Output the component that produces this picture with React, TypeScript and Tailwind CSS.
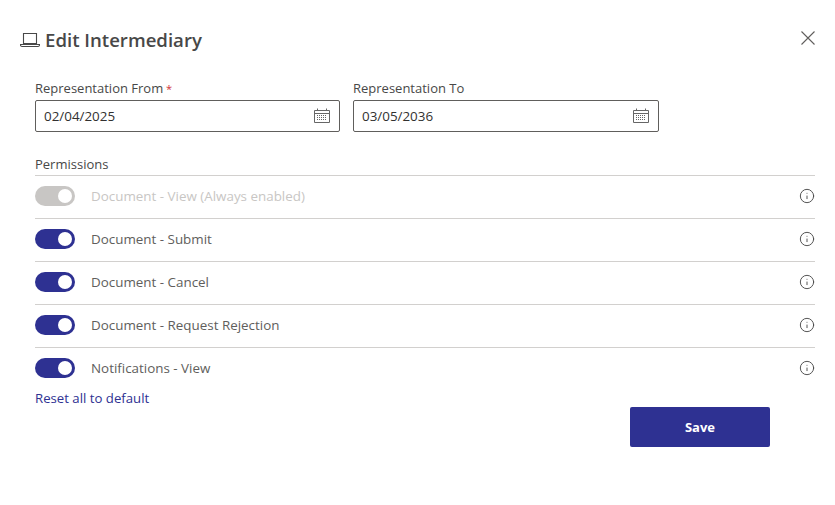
import React from 'react';
import { Info } from 'lucide-react';

const permissions = [
  { label: 'Document - View (Always enabled)', disabled: true },
  { label: 'Document - Submit', disabled: false },
  { label: 'Document - Cancel', disabled: false },
  { label: 'Document - Request Rejection', disabled: false },
  { label: 'Notifications - View', disabled: false },
];

function LaptopIcon() {
  return (
    <svg width="20" height="20" viewBox="0 0 20 20" fill="none" stroke="#484848" strokeWidth="1.1">
      <path d="M3.5 3.5h13v10h-13z" />
      <path d="M0.5 14.5h19v0.5a1.5 1.5 0 0 1-1.5 1.5h-16a1.5 1.5 0 0 1-1.5-1.5z" />
    </svg>
  );
}

function CloseIcon() {
  return (
    <svg width="14" height="14" viewBox="0 0 14 14" fill="none" stroke="#605e5c" strokeWidth="1.1">
      <path d="M0.5 0.5l13 13M13.5 0.5l-13 13" />
    </svg>
  );
}

function CalendarIcon() {
  return (
    <svg width="18" height="18" viewBox="0 0 18 18" fill="none" stroke="#666" strokeWidth="1">
      <path d="M1.5 3.5h15v12h-15z" />
      <path d="M1.5 6.5h15" />
      <path d="M4.5 1.5v2M13.5 1.5v2" />
      <path d="M4 8.5h10M4 10.5h10M4 12.5h10" strokeDasharray="1 1" />
    </svg>
  );
}

function DateField({ label, value, required, width }: { label: string; value: string; required?: boolean; width: string }) {
  return (
    <div className={width}>
      <div className="h-[22px] pt-[1px] text-[13px] leading-[18px] text-[#484848]">
        {label}
        {required && <span className="text-[11px] text-[#d13438]"> *</span>}
      </div>
      <div className="flex h-8 items-center justify-between rounded-[2px] border border-[#605e5c] pl-2 pr-[8px]">
        <span className="text-[13.4px] text-[#323130]">{value}</span>
        <CalendarIcon />
      </div>
    </div>
  );
}

function Toggle({ disabled }: { disabled: boolean }) {
  return (
    <div className={`flex h-5 w-10 items-center justify-end rounded-full pr-[3px] ${disabled ? 'bg-[#c8c6c4]' : 'bg-[#2e3192]'}`}>
      <div className="h-[14px] w-[14px] rounded-full bg-white" />
    </div>
  );
}

export default function App() {
  return (
    <div className="h-[505px] w-[835px] bg-white font-['Open_Sans',sans-serif]">
      <div className="flex h-[78px] items-center justify-between pl-5 pr-5 pt-[2px]">
        <div className="flex items-center gap-[5px]">
          <LaptopIcon />
          <h1 className="text-[18.6px] font-semibold text-[#484848]">Edit Intermediary</h1>
        </div>
        <div className="mb-[4px]">
          <CloseIcon />
        </div>
      </div>

      <div className="pl-[35px] pr-5">
        <div className="flex gap-[13px]">
          <DateField label="Representation From" value="02/04/2025" required width="w-[305px]" />
          <DateField label="Representation To" value="03/05/2036" width="w-[306px]" />
        </div>

        <div className="mt-[22px] h-[22px] border-b border-[#d2d0ce] pt-[1px] text-[13px] leading-[18px] text-[#484848]">Permissions</div>

        {permissions.map((p, i) => (
          <div key={p.label} className={`flex h-[43px] items-center justify-between border-b pb-[2px] ${i < permissions.length - 1 ? 'border-[#d2d0ce]' : 'border-transparent'}`}>
            <div className="flex items-center gap-4">
              <Toggle disabled={p.disabled} />
              <span className={`text-[13.4px] ${p.disabled ? 'text-[#c8c6c4]' : 'text-[#605e5c]'}`}>{p.label}</span>
            </div>
            <Info className="h-4 w-4 text-[#484848]" strokeWidth={1.4} />
          </div>
        ))}

        <a className="-mt-[2px] block text-[13.2px] leading-[18px] text-[#2e3192]">Reset all to default</a>

        <div className="flex justify-end pr-[45px]">
          <button className="h-10 w-[140px] rounded-[2px] bg-[#2e3192] pt-[1px] text-[13px] font-bold text-white">Save</button>
        </div>
      </div>
    </div>
  );
}
